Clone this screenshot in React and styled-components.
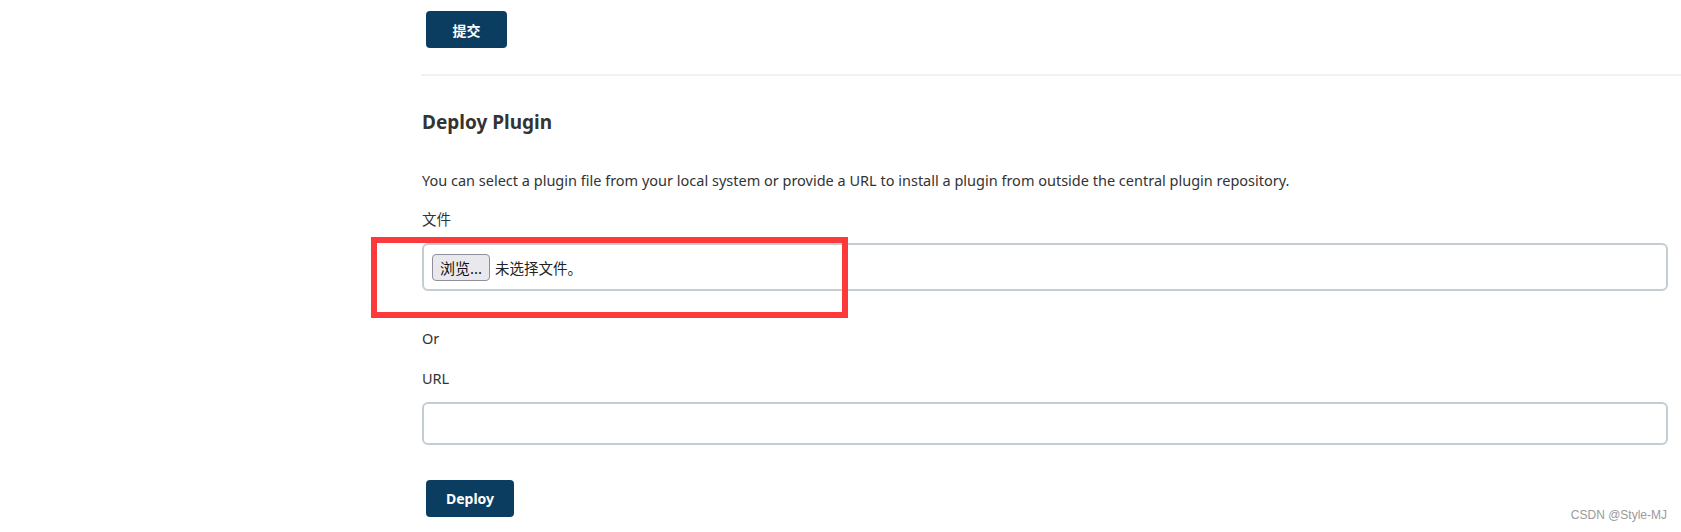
import styled, { createGlobalStyle } from "styled-components";

const GlobalStyle = createGlobalStyle`
  html, body {
    margin: 0;
    padding: 0;
    background: #ffffff;
  }
  body {
    font-family: "Noto Sans", "Noto Sans CJK SC", sans-serif;
    color: #333333;
  }
`;

const Page = styled.div`
  position: relative;
  width: 1681px;
  height: 532px;
  box-sizing: border-box;
  padding: 11px 0 0 422px;
  overflow: hidden;
`;

const Button = styled.button`
  display: block;
  margin-left: 4px;
  width: ${(p) => p.$width}px;
  height: 37px;
  border: none;
  border-radius: 4px;
  background: #0b3d60;
  color: #ffffff;
  font-family: "Noto Sans", "Noto Sans CJK SC", sans-serif;
  font-size: 14px;
  font-weight: 700;
  cursor: pointer;
`;

const Divider = styled.hr`
  margin: 26px 0 0 -1px;
  height: 2px;
  border: none;
  background: #f0f1f2;
`;

const Heading = styled.h2`
  margin: 32px 0 0;
  font-size: 19px;
  line-height: 28px;
  font-weight: 700;
  color: #333333;
`;

const Description = styled.p`
  margin: 34px 0 0;
  font-size: 14.5px;
  line-height: 20px;
`;

const Label = styled.div`
  margin-top: ${(p) => p.$top}px;
  font-size: 14.5px;
  line-height: 20px;
`;

const Field = styled.div`
  margin-top: ${(p) => p.$top}px;
  width: 1246px;
  height: ${(p) => p.$height}px;
  box-sizing: border-box;
  border: 2px solid #c4cdd1;
  border-radius: 6px;
  background: #ffffff;
  display: flex;
  align-items: center;
  gap: 5px;
  padding: 0 8px;
`;

const BrowseButton = styled.span`
  display: inline-flex;
  align-items: center;
  justify-content: center;
  width: 58px;
  height: 27px;
  box-sizing: border-box;
  border: 1px solid #8f8f9d;
  border-radius: 4px;
  background: #e9e9ed;
  color: #111111;
  font-size: 15px;
`;

const FileName = styled.span`
  font-size: 14.5px;
  color: #222222;
`;

const ButtonRow = styled.div`
  margin-top: 35px;
`;

const Highlight = styled.div`
  position: absolute;
  left: 371px;
  top: 237px;
  width: 477px;
  height: 81px;
  box-sizing: border-box;
  border: 6px solid #fc3a3c;
  pointer-events: none;
`;

const Watermark = styled.div`
  position: absolute;
  right: 14px;
  bottom: 10px;
  font-family: "Liberation Sans", Arial, sans-serif;
  font-size: 12px;
  color: #9a9a9a;
`;

export default function App() {
  return (
    <>
      <GlobalStyle />
      <Page>
        <Button $width={81}>提交</Button>
        <Divider />
        <Heading>Deploy Plugin</Heading>
        <Description>
          You can select a plugin file from your local system or provide a URL to install a plugin from outside the central plugin repository.
        </Description>
        <Label $top={19}>文件</Label>
        <Field $top={14} $height={48}>
          <BrowseButton>浏览...</BrowseButton>
          <FileName>未选择文件。</FileName>
        </Field>
        <Label $top={37}>Or</Label>
        <Label $top={20}>URL</Label>
        <Field $top={14} $height={43} />
        <ButtonRow>
          <Button $width={88}>Deploy</Button>
        </ButtonRow>
        <Highlight />
        <Watermark>CSDN @Style-MJ</Watermark>
      </Page>
    </>
  );
}
